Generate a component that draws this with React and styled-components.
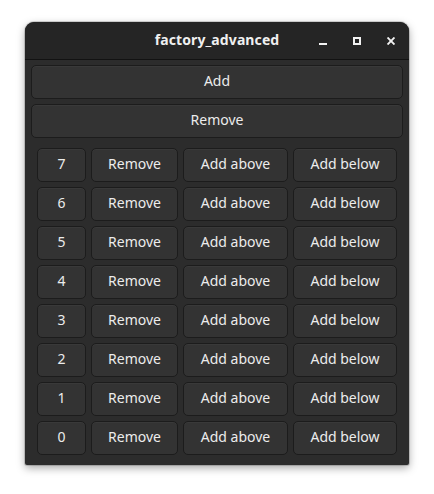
import React from "react";
import styled, { createGlobalStyle } from "styled-components";

const Global = createGlobalStyle`
  html, body {
    margin: 0;
    background: #ffffff;
  }
  body {
    font-family: "Noto Sans", "Open Sans", sans-serif;
  }
`;

const Page = styled.div`
  padding: 22px 0 0 25px;
  width: 434px;
  height: 494px;
  box-sizing: border-box;
`;

const Window = styled.div`
  width: 384px;
  height: 443px;
  display: flex;
  flex-direction: column;
  background: #2c2c2c;
  border-radius: 9px 9px 2px 2px;
  box-shadow: 0 3px 9px rgba(0, 0, 0, 0.35), 0 0 0 1px rgba(0, 0, 0, 0.15);
  overflow: hidden;
`;

const TitleBar = styled.div`
  height: 37px;
  flex: none;
  display: flex;
  align-items: center;
  position: relative;
  background: #252525;
  border-bottom: 1px solid #121212;
`;

const Title = styled.div`
  position: absolute;
  left: 0;
  right: 0;
  top: 8px;
  text-align: center;
  color: #f0f0f0;
  font-weight: 700;
  font-size: 14px;
  letter-spacing: 0.1px;
`;

const Controls = styled.div`
  margin-left: auto;
  margin-right: 14px;
  display: flex;
  align-items: center;
  gap: 26px;
  position: relative;
`;

const Ctl = styled.span`
  width: 8px;
  height: 8px;
  display: flex;
  color: #f2f2f2;
`;

const Content = styled.div`
  display: flex;
  flex-direction: column;
  gap: 5px;
  padding: 5px 6px 10px;
`;

const Button = styled.button`
  height: 34px;
  box-sizing: border-box;
  background: #333333;
  border: 1px solid #1c1c1c;
  border-radius: 5px;
  color: #ececec;
  font-family: "Noto Sans", "Open Sans", sans-serif;
  font-size: 14px;
  padding: 0 0 3px;
  box-shadow: inset 0 1px rgba(255, 255, 255, 0.03);
`;

const Rows = styled.div`
  display: flex;
  flex-direction: column;
  gap: 5px;
  padding: 5px 6px 0;
`;

const Row = styled.div`
  display: grid;
  grid-template-columns: 49px 87px 105px 104px;
  column-gap: 5px;
`;

const Minimize = () => (
  <Ctl>
    <svg width="8" height="8" viewBox="0 0 8 8">
      <rect x="0" y="6" width="8" height="2" fill="currentColor" />
    </svg>
  </Ctl>
);

const Maximize = () => (
  <Ctl>
    <svg width="8" height="8" viewBox="0 0 8 8">
      <rect x="1" y="1" width="6" height="6" fill="none" stroke="currentColor" strokeWidth="2" />
    </svg>
  </Ctl>
);

const Close = () => (
  <Ctl>
    <svg width="8" height="8" viewBox="0 0 8 8">
      <path d="M0.5 0.5 L7.5 7.5 M7.5 0.5 L0.5 7.5" stroke="currentColor" strokeWidth="1.9" />
    </svg>
  </Ctl>
);

const counters = [7, 6, 5, 4, 3, 2, 1, 0];

export default function App() {
  return (
    <Page>
      <Global />
      <Window>
        <TitleBar>
          <Title>factory_advanced</Title>
          <Controls>
            <Minimize />
            <Maximize />
            <Close />
          </Controls>
        </TitleBar>
        <Content>
          <Button>Add</Button>
          <Button>Remove</Button>
          <Rows>
            {counters.map((n) => (
              <Row key={n}>
                <Button>{n}</Button>
                <Button>Remove</Button>
                <Button>Add above</Button>
                <Button>Add below</Button>
              </Row>
            ))}
          </Rows>
        </Content>
      </Window>
    </Page>
  );
}
